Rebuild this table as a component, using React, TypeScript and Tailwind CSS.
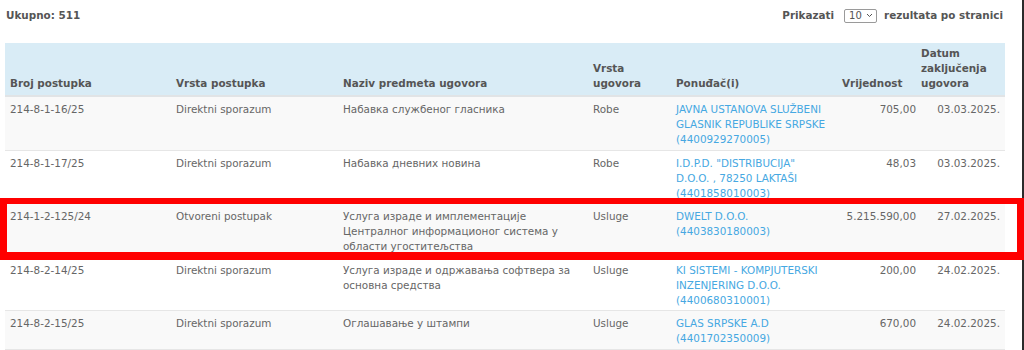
import React from "react"

type Row = {
  broj: string
  vrsta: string
  naziv: string[]
  ugovor: string
  ponudjac: string[]
  vrijednost: string
  datum: string
  marked?: boolean
}

const rows: Row[] = [
  {
    broj: "214-8-1-16/25",
    vrsta: "Direktni sporazum",
    naziv: ["Набавка службеног гласника"],
    ugovor: "Robe",
    ponudjac: ["JAVNA USTANOVA SLUŽBENI", "GLASNIK REPUBLIKE SRPSKE", "(4400929270005)"],
    vrijednost: "705,00",
    datum: "03.03.2025.",
  },
  {
    broj: "214-8-1-17/25",
    vrsta: "Direktni sporazum",
    naziv: ["Набавка дневних новина"],
    ugovor: "Robe",
    ponudjac: ['I.D.P.D. "DISTRIBUCIJA"', "D.O.O. , 78250 LAKTAŠI", "(4401858010003)"],
    vrijednost: "48,03",
    datum: "03.03.2025.",
  },
  {
    broj: "214-1-2-125/24",
    vrsta: "Otvoreni postupak",
    naziv: ["Услуга израде и имплементације", "Централног информационог система у", "области угоститељства"],
    ugovor: "Usluge",
    ponudjac: ["DWELT D.O.O.", "(4403830180003)"],
    vrijednost: "5.215.590,00",
    datum: "27.02.2025.",
    marked: true,
  },
  {
    broj: "214-8-2-14/25",
    vrsta: "Direktni sporazum",
    naziv: ["Услуга израде и одржавања софтвера за", "основна средства"],
    ugovor: "Usluge",
    ponudjac: ["KI SISTEMI - KOMPJUTERSKI", "INZENJERING D.O.O.", "(4400680310001)"],
    vrijednost: "200,00",
    datum: "24.02.2025.",
  },
  {
    broj: "214-8-2-15/25",
    vrsta: "Direktni sporazum",
    naziv: ["Оглашавање у штампи"],
    ugovor: "Usluge",
    ponudjac: ["GLAS SRPSKE A.D", "(4401702350009)"],
    vrijednost: "670,00",
    datum: "24.02.2025.",
  },
]

const cols = "grid grid-cols-[166px_167px_250px_83px_166px_79px_89px]"

function Lines({ items }: { items: string[] }) {
  return (
    <>
      {items.map((l) => (
        <div key={l} className="whitespace-nowrap">
          {l}
        </div>
      ))}
    </>
  )
}

export default function App() {
  return (
    <div className="flex h-[350px] w-[1024px] overflow-hidden bg-white font-['DejaVu_Sans',sans-serif] text-[10.4px] leading-[15px] text-[#666]">
      <div className="flex-1 pl-[5px] pr-[17px]">
        {/* top bar */}
        <div className="flex h-[43px] items-start justify-between pt-[8px] font-bold text-[#555]">
          <div className="pl-[1px]">Ukupno: 511</div>
          <div className="flex items-center pr-[2px]">
            <span>Prikazati</span>
            <div className="ml-[10px] mr-[7px] flex h-[14px] w-[33px] items-center justify-between rounded-[2px] border border-[#9a9a9a] pl-[4px] pr-[3px] text-[10px] font-normal leading-none text-[#555]">
              <span>10</span>
              <svg width="7" height="5" viewBox="0 0 7 5" fill="none">
                <path d="M1 1l2.5 2.5L6 1" stroke="#555" strokeWidth="1" />
              </svg>
            </div>
            <span>rezultata po stranici</span>
          </div>
        </div>

        {/* header */}
        <div className={`${cols} items-end border-b-2 border-[#e1e4e6] bg-[#d9ecf6] font-bold text-[#555]`}>
          <div className="px-[5px] pb-[4px] pt-[3px]">Broj postupka</div>
          <div className="px-[5px] pb-[4px] pt-[3px]">Vrsta postupka</div>
          <div className="px-[5px] pb-[4px] pt-[3px]">Naziv predmeta ugovora</div>
          <div className="px-[5px] pb-[4px] pt-[3px]">
            <Lines items={["Vrsta", "ugovora"]} />
          </div>
          <div className="px-[5px] pb-[4px] pt-[3px]">Ponuđač(i)</div>
          <div className="pb-[4px] pl-[5px] pt-[3px]">Vrijednost</div>
          <div className="px-[5px] pb-[4px] pt-[3px]">
            <Lines items={["Datum", "zaključenja", "ugovora"]} />
          </div>
        </div>

        {/* rows */}
        {rows.map((r, i) => (
          <div
            key={r.broj}
            className={`${cols} relative border-b border-[#e6e6e6] ${i % 2 === 0 ? "bg-[#f9f9f9]" : "bg-white"}`}
          >
            <div className="px-[5px] pb-[2.5px] pt-[5px]">{r.broj}</div>
            <div className="px-[5px] pb-[2.5px] pt-[5px]">{r.vrsta}</div>
            <div className="px-[5px] pb-[2.5px] pt-[5px]">
              <Lines items={r.naziv} />
            </div>
            <div className="px-[5px] pb-[2.5px] pt-[5px]">{r.ugovor}</div>
            <div className="px-[5px] pb-[2.5px] pt-[5px] text-[#46a8e2]">
              <Lines items={r.ponudjac} />
            </div>
            <div className="pb-[2.5px] pl-[5px] pt-[5px] text-right">{r.vrijednost}</div>
            <div className="px-[5px] pb-[2.5px] pt-[5px] text-right">{r.datum}</div>
            {r.marked && (
              <div className="pointer-events-none absolute -bottom-[3.5px] -left-[5px] -right-[19px] -top-[6px] z-10 border-[7px] border-b-[8px] border-t-[6px] border-[#ff0000]" />
            )}
          </div>
        ))}
      </div>
      <div className="w-[2px] shrink-0 bg-[#2b2b2b]" />
    </div>
  )
}
